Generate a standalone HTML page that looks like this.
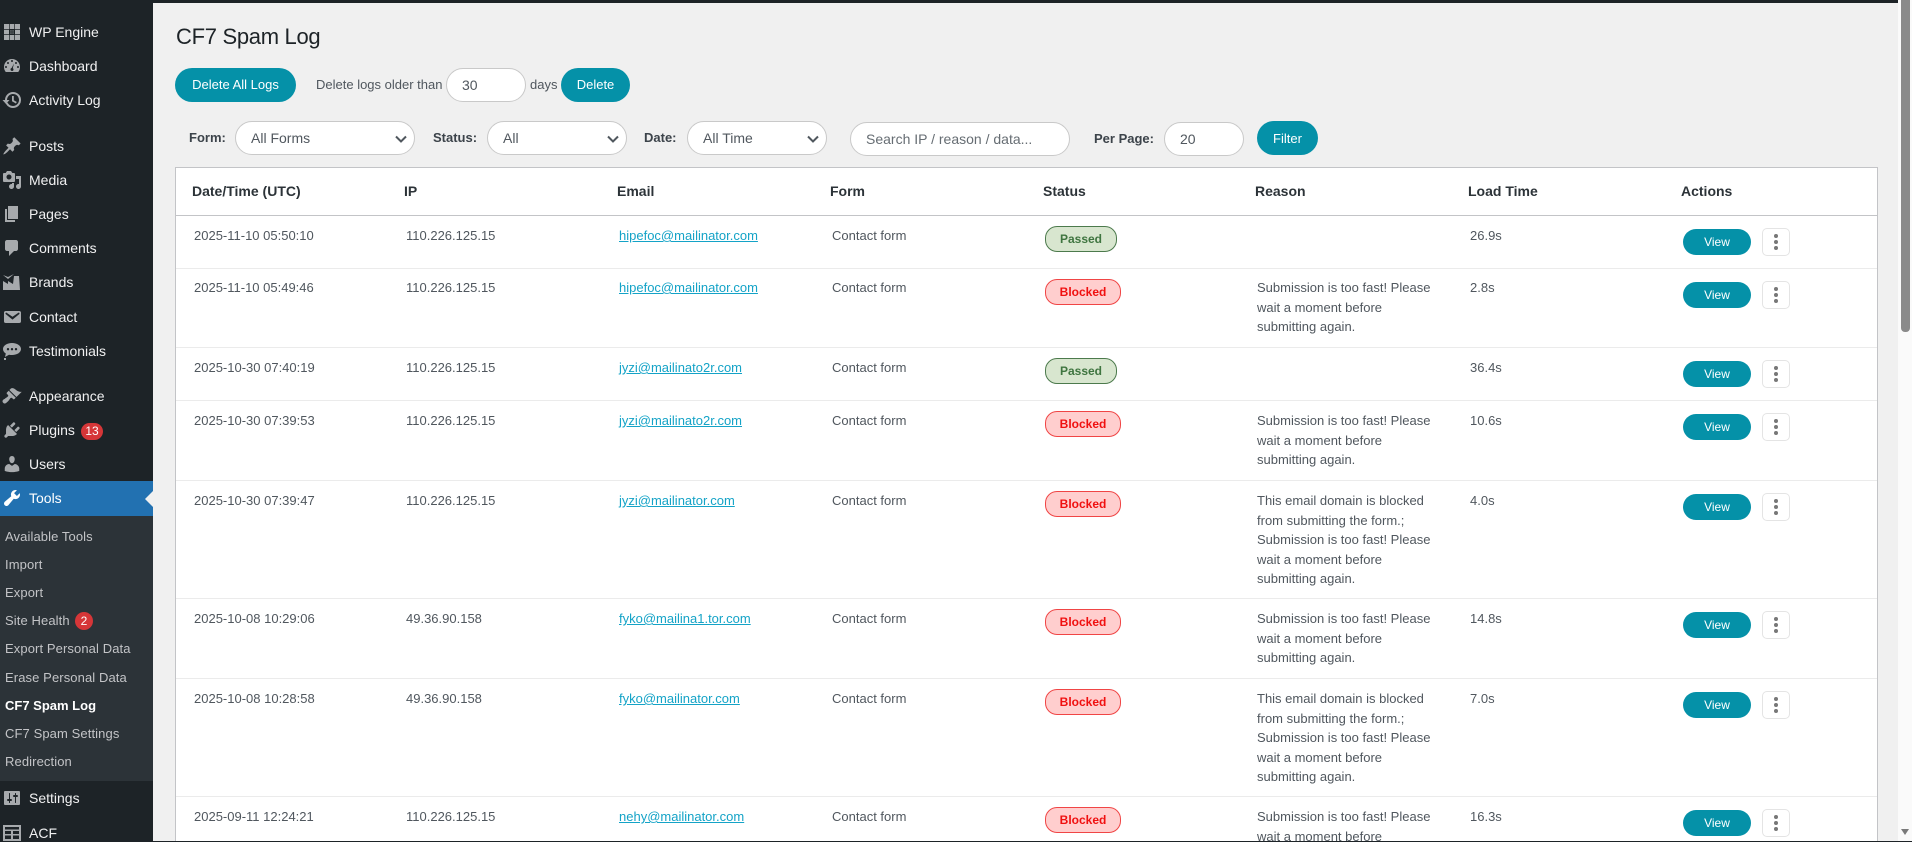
<!DOCTYPE html>
<html><head><meta charset="utf-8"><title>CF7 Spam Log</title>
<style>
*{box-sizing:border-box}
html,body{margin:0;padding:0;width:1912px;height:842px;overflow:hidden;background:#f0f0f0;font-family:"Liberation Sans",Arial,sans-serif}
#wrap{position:absolute;left:0;top:0;width:1912px;height:842px;overflow:hidden}
.a{position:absolute;white-space:nowrap}
#top{position:absolute;left:0;top:0;width:1898px;height:3px;background:#1d2327;z-index:5}
#bot{position:absolute;left:0;top:841px;width:1912px;height:1px;background:#1d2327;z-index:5}
#side{position:absolute;left:0;top:0;width:153px;height:842px;background:#1d2327;overflow:hidden}
.m{position:absolute;left:29px;color:#f0f0f1;font-size:14px;line-height:20px}
.i{position:absolute;left:2px;width:20px;height:20px;fill:#a7aaad}
.s{position:absolute;left:5px;color:#c3c4c7;font-size:13px;line-height:18px;letter-spacing:.1px}
.b{position:absolute;background:#d63638;color:#fff;font-size:11px;text-align:center;border-radius:10px}
.btn{position:absolute;background:#0591a8;color:#fff;font-size:13px;text-align:center;border-radius:17px;height:34px;line-height:34px}
.inp{position:absolute;background:#fff;border:1px solid #c9c9c9;border-radius:17px;height:34px;line-height:32px;font-size:14px;color:#50575e;padding-left:15px}
.lb{position:absolute;font-size:13px;font-weight:bold;color:#3c434a;line-height:20px}
.ch{position:absolute;width:12px;height:8px;fill:none;stroke:#50575e;stroke-width:2}
#tb{position:absolute;left:175px;top:167px;width:1703px;height:680px;background:#fff;border:1px solid #c3c4c7}
.h{position:absolute;top:191px;font-size:14px;font-weight:bold;color:#2c3338;line-height:20px;margin-top:-10px}
.hr{position:absolute;left:176px;width:1701px;height:1px;background:#ebebeb}
.t{position:absolute;font-size:13px;line-height:19.5px;color:#50575e;white-space:nowrap}
.e{color:#14a3c7;text-decoration:underline}
.p{position:absolute;left:1045px;height:26px;line-height:24px;width:72px;border-radius:12px;border:1px solid #4c7a4c;background:#d8e6cf;color:#3f7540;font-size:12px;font-weight:bold;text-align:center}
.r{position:absolute;left:1045px;height:26px;line-height:24px;width:76px;border-radius:12px;border:1px solid #f04545;background:#ffcece;color:#f01010;font-size:12px;font-weight:bold;text-align:center}
.v{position:absolute;left:1683px;width:68px;height:26px;line-height:26px;border-radius:13px;background:#0591a8;color:#fff;font-size:12px;text-align:center}
.d{position:absolute;left:1762px;width:28px;height:28px;border:1px solid #e4e4e4;border-radius:5px;background:#fff}
.d i{position:absolute;left:11px;width:4px;height:4px;border-radius:50%;background:#777}
</style></head><body>
<div id="wrap">
<div id="top"></div><div id="bot"></div>

<div id="side">
<svg class="i" style="top:22px" viewBox="0 0 20 20"><path fill-rule="evenodd" d="M2 2h16v16H2zM7.500 7.500v5h5v-5zM8.400 8.400h1.100v1.100H8.400zM10.500 8.400h1.100v1.100h-1.100zM8.400 10.500h1.100v1.100H8.400zM10.500 10.500h1.100v1.100h-1.100z"/><path d="M7 2h.7v16H7zM12.300 2h.7v16h-.7zM2 7h16v.7H2zM2 12.300h16v.7H2z" fill="#1d2327"/></svg>
<div class="m" style="top:22px">WP Engine</div>
<svg class="i" style="top:56px" viewBox="0 0 20 20"><path fill-rule="evenodd" d="M3.760 16h12.480C17.340 14.630 18 12.890 18 11c0-4.420-3.580-8-8-8s-8 3.580-8 8c0 1.890.66 3.630 1.760 5zM10 4c.55 0 1 .45 1 1s-.45 1-1 1-1-.45-1-1 .45-1 1-1zM6 6c.55 0 1 .45 1 1s-.45 1-1 1-1-.45-1-1 .45-1 1-1zm8 0c.55 0 1 .45 1 1s-.45 1-1 1-1-.45-1-1 .45-1 1-1zM4 10c.55 0 1 .45 1 1s-.45 1-1 1-1-.45-1-1 .45-1 1-1zm12 0c.55 0 1 .45 1 1s-.45 1-1 1-1-.45-1-1 .45-1 1-1zM12 7.500l-1.200 4.600c.4.300.7.800.7 1.400a1.500 1.500 0 1 1-1.900-1.450z"/></svg>
<div class="m" style="top:56px">Dashboard</div>
<svg class="i" style="top:90px" viewBox="0 0 20 20"><path d="M11 2a8 8 0 1 1-7.200 11.500l1.800-.9A6 6 0 1 0 5 10h2.500L4 14 .5 10H3a8 8 0 0 1 8-8zm-1 4h1.800v4.200l3 1.800-.9 1.500L10 11.200z"/></svg>
<div class="m" style="top:90px">Activity Log</div>
<svg class="i" style="top:136px" viewBox="0 0 20 20"><path d="M10.440 3.020l1.820-1.820 6.360 6.350-1.830 1.820c-1.050-.68-2.480-.57-3.410.36l-.75.75c-.92.93-1.040 2.350-.35 3.410l-1.830 1.820-2.410-2.410-2.800 2.790c-.42.42-3.380 2.710-3.800 2.290s1.860-3.390 2.280-3.810l2.790-2.790L4.100 9.360l1.830-1.820c1.050.69 2.480.57 3.400-.36l.75-.75c.93-.92 1.050-2.350.36-3.410z"/></svg>
<div class="m" style="top:136px">Posts</div>
<svg class="i" style="top:170px" viewBox="0 0 20 20"><path fill-rule="evenodd" d="M13 11V4c0-.55-.45-1-1-1h-1.670L9 1H5L3.670 3H2c-.55 0-1 .45-1 1v7c0 .55.45 1 1 1h10c.55 0 1-.45 1-1zM7 4.500c1.380 0 2.500 1.120 2.500 2.500S8.380 9.500 7 9.500 4.500 8.380 4.500 7 5.620 4.500 7 4.500zM14 6h5v10.500c0 1.380-1.120 2.500-2.500 2.500S14 17.880 14 16.500s1.120-2.500 2.500-2.500c.17 0 .34.020.5.050V9h-3V6zm-4 8.050V13h2v3.500c0 1.380-1.120 2.500-2.500 2.500S7 17.880 7 16.500 8.120 14 9.500 14c.17 0 .34.020.5.050z"/></svg>
<div class="m" style="top:170px">Media</div>
<svg class="i" style="top:204px" viewBox="0 0 20 20"><path d="M6 15V2h10v13H6zm-1 1h8v2H3V5h2v11z"/></svg>
<div class="m" style="top:204px">Pages</div>
<svg class="i" style="top:238px" viewBox="0 0 20 20"><path d="M5 2h9c1.100 0 2 .9 2 2v7c0 1.100-.9 2-2 2h-2l-5 5v-5H5c-1.100 0-2-.9-2-2V4c0-1.100.9-2 2-2z"/></svg>
<div class="m" style="top:238px">Comments</div>
<svg class="i" style="top:272px" viewBox="0 0 20 20"><path d="M1 18V9l5 3V9l5 3 1-8h5l1 14zM1 3l5 2 6-3-6 5z"/></svg>
<div class="m" style="top:272px">Brands</div>
<svg class="i" style="top:307px" viewBox="0 0 20 20"><path d="M3.870 4h13.250C18.370 4 19 4.590 19 5.790v8.420c0 1.190-.63 1.790-1.880 1.790H3.870c-1.250 0-1.880-.6-1.880-1.790V5.790c0-1.200.63-1.790 1.880-1.790zm6.620 8.600l6.740-5.530c.24-.2.430-.66.130-1.070-.29-.41-.82-.42-1.170-.17l-5.700 3.860L4.800 5.830c-.35-.25-.88-.24-1.170.17-.3.410-.11.870.13 1.070z"/></svg>
<div class="m" style="top:307px">Contact</div>
<svg class="i" style="top:341px" viewBox="0 0 20 20"><path fill-rule="evenodd" d="M10 2c5 0 9 2.500 9 6s-4 6-9 6c-1 0-2-.1-3-.3L3 16l.8-3.500C2 11.500 1 9.800 1 8c0-3.500 4-6 9-6zM6 7a1.200 1.200 0 1 0 0 2.400A1.200 1.200 0 0 0 6 7zm4 0a1.200 1.200 0 1 0 0 2.400A1.200 1.200 0 0 0 10 7zm4 0a1.200 1.200 0 1 0 0 2.400A1.200 1.200 0 0 0 14 7zM2 17h2v2H2z"/></svg>
<div class="m" style="top:341px">Testimonials</div>
<svg class="i" style="top:386px" viewBox="0 0 20 20"><path d="M14.480 11.060L7.410 3.990l1.500-1.500c.5-.56 2.300-.47 3.510.32 1.210.8 1.430 1.280 2.910 2.100 1.180.64 2.450 1.260 4.450.85zm-.71.71L6.700 4.700 4.930 6.470c-.39.39-.39 1.020 0 1.410l1.060 1.060c.39.39.39 1.030 0 1.420-.6.6-1.430 1.110-2.210 1.690-.35.26-.7.53-1.010.84C1.430 13.230.5 14.320.5 15.120c0 1.300 1.060 2.380 2.380 2.380.73 0 1.880-.9 3.200-2.270.32-.33.58-.67.84-1.030.58-.77 1.100-1.610 1.680-2.200.39-.39 1.030-.39 1.420 0l1.060 1.060c.39.39 1.020.39 1.410 0z"/></svg>
<div class="m" style="top:386px">Appearance</div>
<svg class="i" style="top:420px" viewBox="0 0 20 20"><path d="M13.110 4.360L9.870 7.600 8 5.730l3.240-3.240c.35-.34 1.050-.2 1.560.32.52.51.66 1.210.31 1.550zm-8 1.770l.91-1.120 9.010 9.010-1.190.84c-.71.71-2.630 1.160-3.820 1.160H6.140L4.900 17.260c-.59.59-1.540.59-2.120 0-.59-.58-.59-1.530 0-2.120l1.240-1.240v-3.880c0-1.130.4-3.190 1.090-3.890zm7.260 3.970l3.240-3.240c.34-.35 1.040-.21 1.550.31.52.51.66 1.210.31 1.550l-3.240 3.250z"/></svg>
<div class="m" style="top:420px">Plugins</div>
<div class="b" style="left:81px;top:423px;width:22px;height:17px;line-height:17px;font-size:12px">13</div>
<svg class="i" style="top:454px" viewBox="0 0 20 20"><path d="M10 9.250c-2.270 0-2.730-3.440-2.730-3.440C7 4.020 7.820 2 9.970 2c2.160 0 2.980 2.020 2.710 3.810 0 0-.41 3.440-2.680 3.440zm0 2.570L12.720 10c2.390 0 4.520 2.330 4.520 4.530v2.490s-3.650 1.130-7.240 1.130c-3.650 0-7.240-1.130-7.240-1.130v-2.490c0-2.250 1.940-4.480 4.470-4.480z"/></svg>
<div class="m" style="top:454px">Users</div>
<div style="position:absolute;left:0;top:481px;width:153px;height:35px;background:#2271b1"></div>
<svg class="i" style="top:488px;fill:#fff" viewBox="0 0 20 20"><path d="M16.680 9.770c-1.340 1.340-3.300 1.670-4.950.99l-5.410 6.520c-.99.99-2.590.99-3.580 0s-.99-2.590 0-3.570l6.520-5.420c-.68-1.650-.35-3.610.99-4.950 1.280-1.280 3.120-1.620 4.720-1.060l-2.890 2.890 2.820 2.820 2.860-2.870c.53 1.580.18 3.390-1.080 4.650z"/></svg>
<div class="m" style="top:488px;color:#fff">Tools</div>
<div style="position:absolute;left:145px;top:491px;width:0;height:0;border:8px solid transparent;border-left:0;border-right-color:#f0f0f0"></div>
<div style="position:absolute;left:0;top:516px;width:153px;height:265px;background:#2c3338"></div>
<div class="s" style="top:528px">Available Tools</div>
<div class="s" style="top:556px">Import</div>
<div class="s" style="top:584px">Export</div>
<div class="s" style="top:612px">Site Health</div>
<div class="b" style="left:75px;top:612px;width:18px;height:18px;line-height:18px;font-size:12px;border-radius:50%">2</div>
<div class="s" style="top:640px">Export Personal Data</div>
<div class="s" style="top:669px">Erase Personal Data</div>
<div class="s" style="top:697px;color:#fff;font-weight:bold;letter-spacing:0">CF7 Spam Log</div>
<div class="s" style="top:725px">CF7 Spam Settings</div>
<div class="s" style="top:753px">Redirection</div>
<svg class="i" style="top:788px" viewBox="0 0 20 20"><path fill-rule="evenodd" d="M18 16V4c0-.55-.45-1-1-1H3c-.55 0-1 .45-1 1v12c0 .55.45 1 1 1h14c.55 0 1-.45 1-1zM8 11h1c.55 0 1 .45 1 1s-.45 1-1 1H8v1.500c0 .28-.22.5-.5.5s-.5-.22-.5-.5V13H6c-.55 0-1-.45-1-1s.45-1 1-1h1V5.500c0-.28.22-.5.5-.5s.5.22.5.5V11zm5-2h-1c-.55 0-1-.45-1-1s.45-1 1-1h1V5.500c0-.28.22-.5.5-.5s.5.22.5.5V7h1c.55 0 1 .45 1 1s-.45 1-1 1h-1v5.500c0 .28-.22.5-.5.5s-.5-.22-.5-.5V9z"/></svg>
<div class="m" style="top:788px">Settings</div>
<svg class="i" style="top:823px" viewBox="0 0 20 20"><path fill-rule="evenodd" d="M1 2h18v16H1zM3 4v2.500h14V4zM3 8v3h6V8zm8 0v3h6V8zM3 12.500V16h6v-3.500zm8 0V16h6v-3.500z"/></svg>
<div class="m" style="top:823px">ACF</div>
</div>

<div class="a" style="left:176px;top:23px;font-size:22px;line-height:28px;color:#1d2327;letter-spacing:-.3px">CF7 Spam Log</div>
<div class="btn" style="left:175px;top:68px;width:121px">Delete All Logs</div>
<div class="a" style="left:316px;top:75px;font-size:13px;line-height:20px;color:#50575e">Delete logs older than</div>
<div class="inp" style="left:446px;top:68px;width:80px">30</div>
<div class="a" style="left:530px;top:75px;font-size:13px;line-height:20px;color:#50575e">days</div>
<div class="btn" style="left:561px;top:68px;width:69px">Delete</div>

<div class="lb" style="left:189px;top:128px">Form:</div>
<div class="inp" style="left:235px;top:121px;width:180px">All Forms</div>
<svg class="ch" style="left:395px;top:135px" viewBox="0 0 12 8"><path d="M1 1.500l5 5 5-5"/></svg>
<div class="lb" style="left:433px;top:128px">Status:</div>
<div class="inp" style="left:487px;top:121px;width:140px">All</div>
<svg class="ch" style="left:607px;top:135px" viewBox="0 0 12 8"><path d="M1 1.500l5 5 5-5"/></svg>
<div class="lb" style="left:644px;top:128px">Date:</div>
<div class="inp" style="left:687px;top:121px;width:140px">All Time</div>
<svg class="ch" style="left:807px;top:135px" viewBox="0 0 12 8"><path d="M1 1.500l5 5 5-5"/></svg>
<div class="inp" style="left:850px;top:122px;width:220px;color:#666d73">Search IP / reason / data...</div>
<div class="lb" style="left:1094px;top:129px">Per Page:</div>
<div class="inp" style="left:1164px;top:122px;width:80px">20</div>
<div class="btn" style="left:1257px;top:121px;width:61px;line-height:35px">Filter</div>

<div id="tb"></div>
<div class="h" style="left:192px">Date/Time (UTC)</div>
<div class="h" style="left:404px">IP</div>
<div class="h" style="left:617px">Email</div>
<div class="h" style="left:830px">Form</div>
<div class="h" style="left:1043px">Status</div>
<div class="h" style="left:1255px">Reason</div>
<div class="h" style="left:1468px">Load Time</div>
<div class="h" style="left:1681px">Actions</div>
<div class="hr" style="top:215px;background:#c3c4c7"></div>
<div class="hr" style="top:268px"></div>
<div class="hr" style="top:347px"></div>
<div class="hr" style="top:400px"></div>
<div class="hr" style="top:480px"></div>
<div class="hr" style="top:598px"></div>
<div class="hr" style="top:678px"></div>
<div class="hr" style="top:796px"></div>

<!-- row 1 -->
<div class="t" style="left:194px;top:226px">2025-11-10 05:50:10</div><div class="t" style="left:406px;top:226px">110.226.125.15</div>
<div class="t e" style="left:619px;top:226px">hipefoc@mailinator.com</div><div class="t" style="left:832px;top:226px">Contact form</div>
<div class="p" style="top:226px">Passed</div><div class="t" style="left:1470px;top:226px">26.9s</div>
<div class="v" style="top:229px">View</div><div class="d" style="top:228px"><i style="top:5px"></i><i style="top:11px"></i><i style="top:17px"></i></div>
<!-- row 2 -->
<div class="t" style="left:194px;top:278px">2025-11-10 05:49:46</div><div class="t" style="left:406px;top:278px">110.226.125.15</div>
<div class="t e" style="left:619px;top:278px">hipefoc@mailinator.com</div><div class="t" style="left:832px;top:278px">Contact form</div>
<div class="r" style="top:279px">Blocked</div><div class="t" style="left:1257px;top:278px">Submission is too fast! Please<br>wait a moment before<br>submitting again.</div><div class="t" style="left:1470px;top:278px">2.8s</div>
<div class="v" style="top:282px">View</div><div class="d" style="top:281px"><i style="top:5px"></i><i style="top:11px"></i><i style="top:17px"></i></div>
<!-- row 3 -->
<div class="t" style="left:194px;top:358px">2025-10-30 07:40:19</div><div class="t" style="left:406px;top:358px">110.226.125.15</div>
<div class="t e" style="left:619px;top:358px">jyzi@mailinato2r.com</div><div class="t" style="left:832px;top:358px">Contact form</div>
<div class="p" style="top:358px">Passed</div><div class="t" style="left:1470px;top:358px">36.4s</div>
<div class="v" style="top:361px">View</div><div class="d" style="top:360px"><i style="top:5px"></i><i style="top:11px"></i><i style="top:17px"></i></div>
<!-- row 4 -->
<div class="t" style="left:194px;top:411px">2025-10-30 07:39:53</div><div class="t" style="left:406px;top:411px">110.226.125.15</div>
<div class="t e" style="left:619px;top:411px">jyzi@mailinato2r.com</div><div class="t" style="left:832px;top:411px">Contact form</div>
<div class="r" style="top:411px">Blocked</div><div class="t" style="left:1257px;top:411px">Submission is too fast! Please<br>wait a moment before<br>submitting again.</div><div class="t" style="left:1470px;top:411px">10.6s</div>
<div class="v" style="top:414px">View</div><div class="d" style="top:413px"><i style="top:5px"></i><i style="top:11px"></i><i style="top:17px"></i></div>
<!-- row 5 -->
<div class="t" style="left:194px;top:491px">2025-10-30 07:39:47</div><div class="t" style="left:406px;top:491px">110.226.125.15</div>
<div class="t e" style="left:619px;top:491px">jyzi@mailinator.com</div><div class="t" style="left:832px;top:491px">Contact form</div>
<div class="r" style="top:491px">Blocked</div><div class="t" style="left:1257px;top:491px">This email domain is blocked<br>from submitting the form.;<br>Submission is too fast! Please<br>wait a moment before<br>submitting again.</div><div class="t" style="left:1470px;top:491px">4.0s</div>
<div class="v" style="top:494px">View</div><div class="d" style="top:493px"><i style="top:5px"></i><i style="top:11px"></i><i style="top:17px"></i></div>
<!-- row 6 -->
<div class="t" style="left:194px;top:609px">2025-10-08 10:29:06</div><div class="t" style="left:406px;top:609px">49.36.90.158</div>
<div class="t e" style="left:619px;top:609px">fyko@mailina1.tor.com</div><div class="t" style="left:832px;top:609px">Contact form</div>
<div class="r" style="top:609px">Blocked</div><div class="t" style="left:1257px;top:609px">Submission is too fast! Please<br>wait a moment before<br>submitting again.</div><div class="t" style="left:1470px;top:609px">14.8s</div>
<div class="v" style="top:612px">View</div><div class="d" style="top:611px"><i style="top:5px"></i><i style="top:11px"></i><i style="top:17px"></i></div>
<!-- row 7 -->
<div class="t" style="left:194px;top:689px">2025-10-08 10:28:58</div><div class="t" style="left:406px;top:689px">49.36.90.158</div>
<div class="t e" style="left:619px;top:689px">fyko@mailinator.com</div><div class="t" style="left:832px;top:689px">Contact form</div>
<div class="r" style="top:689px">Blocked</div><div class="t" style="left:1257px;top:689px">This email domain is blocked<br>from submitting the form.;<br>Submission is too fast! Please<br>wait a moment before<br>submitting again.</div><div class="t" style="left:1470px;top:689px">7.0s</div>
<div class="v" style="top:692px">View</div><div class="d" style="top:691px"><i style="top:5px"></i><i style="top:11px"></i><i style="top:17px"></i></div>
<!-- row 8 -->
<div class="t" style="left:194px;top:807px">2025-09-11 12:24:21</div><div class="t" style="left:406px;top:807px">110.226.125.15</div>
<div class="t e" style="left:619px;top:807px">nehy@mailinator.com</div><div class="t" style="left:832px;top:807px">Contact form</div>
<div class="r" style="top:807px">Blocked</div><div class="t" style="left:1257px;top:807px">Submission is too fast! Please<br>wait a moment before</div><div class="t" style="left:1470px;top:807px">16.3s</div>
<div class="v" style="top:810px">View</div><div class="d" style="top:809px"><i style="top:5px"></i><i style="top:11px"></i><i style="top:17px"></i></div>

<div style="position:absolute;left:1898px;top:0;width:14px;height:841px;background:#fafafa;z-index:3"></div>
<div style="position:absolute;left:1901px;top:0;width:9px;height:332px;background:#8a8a8a;border-radius:0 0 4px 4px;z-index:4"></div>
<div style="position:absolute;left:1901px;top:829px;width:0;height:0;border:4.5px solid transparent;border-bottom:0;border-top:6px solid #7a7a7a;z-index:4"></div>
</div>
</body></html>
